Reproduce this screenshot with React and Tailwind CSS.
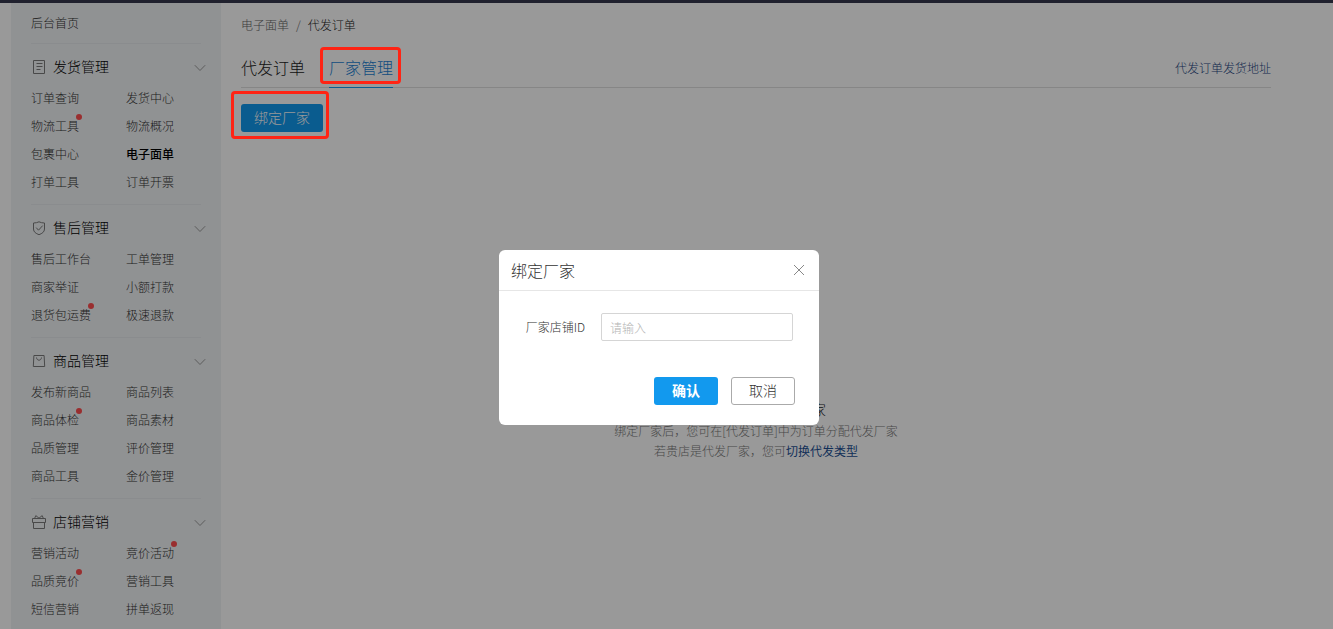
const menu = [
  {
    title: "发货管理",
    icon: "order",
    items: [
      { label: "订单查询" },
      { label: "发货中心" },
      { label: "物流工具", dot: true },
      { label: "物流概况" },
      { label: "包裹中心" },
      { label: "电子面单", active: true },
      { label: "打单工具" },
      { label: "订单开票" },
    ],
  },
  {
    title: "售后管理",
    icon: "shield",
    items: [
      { label: "售后工作台" },
      { label: "工单管理" },
      { label: "商家举证" },
      { label: "小额打款" },
      { label: "退货包运费", dot: true },
      { label: "极速退款" },
    ],
  },
  {
    title: "商品管理",
    icon: "bag",
    items: [
      { label: "发布新商品" },
      { label: "商品列表" },
      { label: "商品体检", dot: true },
      { label: "商品素材" },
      { label: "品质管理" },
      { label: "评价管理" },
      { label: "商品工具" },
      { label: "金价管理" },
    ],
  },
  {
    title: "店铺营销",
    icon: "gift",
    items: [
      { label: "营销活动" },
      { label: "竞价活动", dot: true },
      { label: "品质竞价", dot: true },
      { label: "营销工具" },
      { label: "短信营销" },
      { label: "拼单返现" },
    ],
  },
];

const iconPaths = {
  order: "M2.5.5h11v13h-11zM5.5 3.5h6M5.5 6.5h6M5.5 9.5h4",
  shield: "M8 .8Q10.500 2 13.500 2v6c0 3-2.400 4.500-5.500 5.700C4.900 12.500 2.500 11 2.500 8V2Q5.500 2 8 .8zM5.200 6.600l2.300 2.600 4.200-4.600",
  bag: "M2.900 1.500h10.200l.6 11H2.300zM5.500 3.500c.3 3.600 4.700 3.600 5 0",
  gift: "M1.500 3.500h13v4h-13zM2.500 7.500h11v6h-11zM8 3.200 4.800.6 3.700 3.200M8 3.200 11.200.6l1.100 2.600",
};

function MenuIcon({ name }) {
  return (
    <svg viewBox="0 -2 16 16" className="size-4 text-[#7a7a7a]" fill="none" stroke="currentColor" aria-hidden="true">
      <path d={iconPaths[name]} />
    </svg>
  );
}

function MenuSection({ title, icon, items }) {
  return (
    <section className="border-t border-[#e7eaed] pt-2.5 pb-2">
      <h2 className="mb-1.5 -mr-[5px]">
        <button className="flex w-full items-center gap-1.5 text-sm leading-6 text-black">
          <MenuIcon name={icon} />
          {title}
          <svg viewBox="0 -4 12 12" className="ml-auto size-3 text-[#999]" fill="none" stroke="currentColor" aria-hidden="true">
            <path d="M.8 1.200 6 6.500l5.200-5.300" />
          </svg>
        </button>
      </h2>
      <ul className="grid grid-cols-[95px_1fr] text-xs leading-7">
        {items.map((item) => (
          <li key={item.label} className="whitespace-nowrap">
            <a href="#" className={item.active ? "relative font-medium text-black" : "relative text-[#333]"}>
              {item.label}
              {item.dot && <span className="absolute -top-[3px] -right-[3px] size-1.5 rounded-full bg-[#ff4d4f]" />}
            </a>
          </li>
        ))}
      </ul>
    </section>
  );
}

function Sidebar() {
  return (
    <nav className="ml-[11px] w-[210px] shrink-0 bg-[#f1f4f6] px-5">
      <a href="#" className="block text-xs leading-10 text-[#333]">后台首页</a>
      {menu.map((section) => (
        <MenuSection key={section.title} {...section} />
      ))}
    </nav>
  );
}

function BindDialog() {
  return (
    <div className="fixed inset-0 z-10 flex items-center justify-center bg-black/40 pt-[46px] pr-[15px]">
      <div role="dialog" aria-labelledby="bind-title" className="w-80 rounded-md bg-white">
        <header className="flex items-center justify-between border-b border-[#e6e6e6] px-3">
          <h2 id="bind-title" className="text-base leading-10 text-[#333]">绑定厂家</h2>
          <button aria-label="关闭" className="p-0.5">
            <svg viewBox="0 0 12 12" className="size-3 text-[#888]" fill="none" stroke="currentColor">
              <path d="M1 1l10 10M11 1 1 11" />
            </svg>
          </button>
        </header>
        <form className="px-6 pt-[22px] pb-5" onSubmit={(e) => e.preventDefault()}>
          <div className="flex items-center justify-end gap-4 pr-0.5">
            <label htmlFor="shop-id" className="text-xs text-[#333]">厂家店铺ID</label>
            <input
              id="shop-id"
              placeholder="请输入"
              className="h-7 w-48 rounded-xs border border-[#d5d5d5] px-2 text-xs outline-none placeholder:text-[#b4b4b4]"
            />
          </div>
          <div className="mt-9 flex justify-end gap-[13px] text-sm">
            <button className="h-7 w-16 rounded-[3px] bg-[#1299ee] pb-0.5 font-bold text-white">确认</button>
            <button type="button" className="h-7 w-16 rounded-[3px] border border-[#aaa] pb-0.5 text-[#333]">取消</button>
          </div>
        </form>
      </div>
    </div>
  );
}

export default function App() {
  return (
    <div className="flex h-screen flex-col overflow-hidden bg-white font-['Noto_Sans_CJK_SC',sans-serif] font-light">
      <div className="h-[3px] shrink-0 bg-[#36374e]" />
      <div className="flex min-h-0 flex-1">
        <Sidebar />
        <main className="min-w-0 flex-1 pr-[62px] pl-5">
          <div className="flex gap-[7px] pt-3 text-xs leading-5 text-[#666]">
            <a href="#">电子面单</a>
            <span>/</span>
            <span className="text-[#222]">代发订单</span>
          </div>

          <div className="mt-3 flex items-center justify-between border-b border-[#e0e0e0]">
            <div className="flex gap-6 text-base leading-10">
              <button className="text-[#222]">代发订单</button>
              <button className="relative -mb-px border-b border-[#1299ee] text-[#1a7fd4]">
                厂家管理
                <span className="absolute -right-2 -left-[9px] top-0 bottom-[3px] z-20 rounded-sm border-3 border-[#ff2414]" />
              </button>
            </div>
            <a href="#" className="pt-0.5 text-xs text-[#1c4480]">代发订单发货地址</a>
          </div>

          <div className="relative mt-4 w-fit">
            <button className="h-7 rounded-[3px] bg-[#1299ee] px-[13px] pb-0.5 text-sm text-white">绑定厂家</button>
            <span className="absolute -top-[13px] -right-1.5 -bottom-[7px] -left-2.5 z-20 rounded-sm border-3 border-[#ff2414]" />
          </div>

          <div className="mt-[267px] text-center text-xs leading-5 text-[#777]">
            <p className="text-sm text-[#222]">您还没有绑定代发厂家</p>
            <p className="mt-0.5">绑定厂家后，您可在[代发订单]中为订单分配代发厂家</p>
            <p>
              若贵店是代发厂家，您可<a href="#" className="font-normal text-[#1c4f94]">切换代发类型</a>
            </p>
          </div>
        </main>
      </div>
      <BindDialog />
    </div>
  );
}
